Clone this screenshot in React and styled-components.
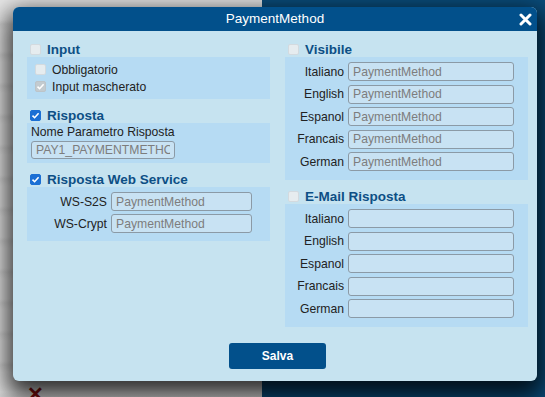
import React from 'react';
import styled, {createGlobalStyle} from 'styled-components';

const GlobalStyle = createGlobalStyle`
    html, body {
        margin: 0;
        padding: 0;
        overflow: hidden;
    }
    body {
        font-family: "Liberation Sans", Arial, sans-serif;
    }
`;

const Page = styled.div`
    position: relative;
    display: grid;
    grid-template-columns: 262px 1fr;
    width: 545px;
    height: 397px;
    overflow: hidden;
`;

const LeftPane = styled.div`
    position: relative;
    background: repeating-linear-gradient(
            180deg,
            #e8e8e8 0px,
            #e8e8e8 20px,
            #dcdcdc 24px,
            #e8e8e8 31px
    );
`;

const RightPane = styled.div`
    background: #0a4d7c;
`;

const RedMark = styled.span`
    position: absolute;
    left: 27px;
    top: 384px;
    color: #8a0c0c;
    font-size: 20px;
    font-weight: bold;
    line-height: 1;
`;

const Dialog = styled.div`
    position: absolute;
    left: 13px;
    top: 7px;
    width: 524px;
    background: #c6e3f0;
    border-radius: 6px;
    overflow: hidden;
    box-shadow: 0 10px 24px 6px rgba(0, 0, 0, 0.8);
`;

const Header = styled.div`
    position: relative;
    height: 24px;
    background: #02508b;
    color: #fff;
    font-size: 13.5px;
    line-height: 24px;
    text-align: center;
`;

const Close = styled.svg`
    position: absolute;
    right: 5px;
    top: 6px;
`;

const Body = styled.div`
    display: grid;
    grid-template-columns: 243px 243px;
    column-gap: 15px;
    padding: 10px 9px 0 14px;
`;

const Column = styled.div`
    display: flex;
    flex-direction: column;
`;

const Heading = styled.div`
    display: flex;
    align-items: center;
    gap: 6px;
    height: 16px;
    padding-left: 3px;
    margin-top: ${(props) => (props.first ? '0' : '8px')};
    color: #0d4f85;
    font-size: 13.5px;
    font-weight: bold;
`;

const Section = styled.div`
    display: flex;
    flex-direction: column;
    gap: ${(props) => props.gap || '3px'};
    padding: ${(props) => props.pad || '5px 0 8px 0'};
    background: #b6dbf3;
`;

const Box = styled.span`
    display: inline-flex;
    align-items: center;
    justify-content: center;
    box-sizing: border-box;
    width: 11px;
    height: 11px;
    flex-shrink: 0;
    border-radius: 2px;
    background: ${(props) => (props.checked ? (props.muted ? '#c3cbd0' : '#1b6fd4') : '#e6ecef')};
    border: 1px solid ${(props) => (props.checked ? (props.muted ? '#bcc4c9' : '#1b6fd4') : '#d3dadf')};
`;

const Check = ({checked, muted}) => (
    <Box checked={checked} muted={muted}>
        {checked && (
            <svg width="9" height="9" viewBox="0 0 9 9">
                <path d="M1.5 4.6 L3.6 6.7 L7.6 2.3" fill="none" stroke="#fff" strokeWidth="1.6"/>
            </svg>
        )}
    </Box>
);

const OptionRow = styled.div`
    display: flex;
    align-items: center;
    gap: 6px;
    height: 17px;
    padding-left: 8px;
    color: #222;
    font-size: 12.2px;
`;

const Caption = styled.div`
    color: #222;
    font-size: 12.2px;
    line-height: 14px;
`;

const FieldRow = styled.div`
    display: flex;
    align-items: center;
    gap: 4px;
`;

const Label = styled.span`
    width: ${(props) => props.w}px;
    text-align: right;
    color: #222;
    font-size: 12.2px;
`;

const Field = styled.input`
    box-sizing: border-box;
    width: ${(props) => props.w}px;
    height: ${(props) => props.h || 19}px;
    margin: 0;
    padding: 0 4px;
    border: 1px solid #8b9aa6;
    border-radius: 3px;
    background: #c8e2f3;
    color: #7d7d7d;
    font-family: "Liberation Sans", Arial, sans-serif;
    font-size: 12.2px;
    outline: none;
`;

const Footer = styled.div`
    display: flex;
    justify-content: center;
    padding: 16px 0 12px 0;
`;

const SaveButton = styled.button`
    width: 97px;
    height: 26px;
    border: none;
    border-radius: 3px;
    background: #02508b;
    color: #fff;
    font-family: "Liberation Sans", Arial, sans-serif;
    font-size: 12px;
    font-weight: bold;
    margin-left: 5px;
`;

const languages = ['Italiano', 'English', 'Espanol', 'Francais', 'German'];

const LangField = ({label, value}) => (
    <FieldRow>
        <Label w={59}>{label}</Label>
        <Field w={166} value={value} readOnly/>
    </FieldRow>
);

export default function App() {
    return (
        <>
            <GlobalStyle/>
            <Page>
                <LeftPane>
                    <RedMark aria-hidden="true">✕</RedMark>
                </LeftPane>
                <RightPane/>
                <Dialog>
                    <Header>
                        PaymentMethod
                        <Close width="13" height="13" viewBox="0 0 13 13">
                            <path d="M2 2 L11 11 M11 2 L2 11" stroke="#fff" strokeWidth="3" strokeLinecap="round"/>
                        </Close>
                    </Header>
                    <Body>
                        <Column>
                            <Heading first><Check/>Input</Heading>
                            <Section gap="0" pad="4px 0 4px 0">
                                <OptionRow><Check/>Obbligatorio</OptionRow>
                                <OptionRow><Check checked muted/>Input mascherato</OptionRow>
                            </Section>

                            <Heading><Check checked/>Risposta</Heading>
                            <Section gap="2px" pad="2px 4px 4px 4px">
                                <Caption>Nome Parametro Risposta</Caption>
                                <Field w={144} h={18} value="PAY1_PAYMENTMETHOD" readOnly/>
                            </Section>

                            <Heading><Check checked/>Risposta Web Service</Heading>
                            <Section>
                                <FieldRow>
                                    <Label w={80}>WS-S2S</Label>
                                    <Field w={141} value="PaymentMethod" readOnly/>
                                </FieldRow>
                                <FieldRow>
                                    <Label w={80}>WS-Crypt</Label>
                                    <Field w={141} value="PaymentMethod" readOnly/>
                                </FieldRow>
                            </Section>
                        </Column>

                        <Column>
                            <Heading first><Check/>Visibile</Heading>
                            <Section gap="3.5px" pad="5px 0 9px 0">
                                {languages.map((l) => (
                                    <LangField key={l} label={l} value="PaymentMethod"/>
                                ))}
                            </Section>

                            <Heading><Check/>E-Mail Risposta</Heading>
                            <Section gap="3.5px" pad="5px 0 9px 0">
                                {languages.map((l) => (
                                    <LangField key={l} label={l} value=""/>
                                ))}
                            </Section>
                        </Column>
                    </Body>
                    <Footer>
                        <SaveButton>Salva</SaveButton>
                    </Footer>
                </Dialog>
            </Page>
        </>
    );
}
